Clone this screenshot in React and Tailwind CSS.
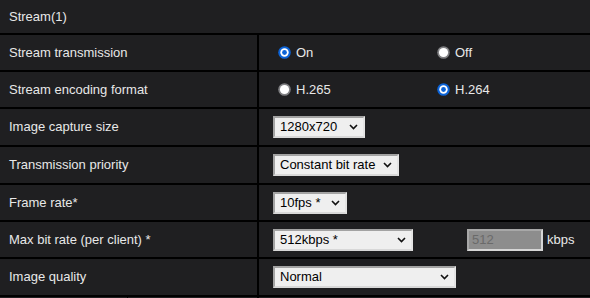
import React from "react";

const Radio = ({ checked }) => (
  <svg width="13" height="13" viewBox="0 0 13 13" className="shrink-0">
    {checked ? (
      <>
        <circle cx="6.5" cy="6.5" r="6.3" fill="#0b63d8" />
        <circle cx="6.5" cy="6.5" r="4.2" fill="#ffffff" />
        <circle cx="6.5" cy="6.5" r="2.4" fill="#0b63d8" />
      </>
    ) : (
      <>
        <circle cx="6.5" cy="6.5" r="6.3" fill="#7f7f82" />
        <circle cx="6.5" cy="6.5" r="4.6" fill="#ffffff" />
      </>
    )}
  </svg>
);

const Chevron = () => (
  <svg width="9" height="6" viewBox="0 0 9 6" className="shrink-0">
    <path d="M1 1l3.5 3.5L8 1" fill="none" stroke="#111" strokeWidth="1.6" />
  </svg>
);

const Select = ({ value, width }) => (
  <div
    className="h-[22px] flex items-center justify-between pl-[5px] pr-[5px] bg-[#efefef] border-2 border-t-[#a3a3a3] border-l-[#a3a3a3] border-b-[#d8d8d8] border-r-[#e4e4e4] text-[13px] text-black"
    style={{ width }}
  >
    <span>{value}</span>
    <Chevron />
  </div>
);

const RadioPair = ({ options, selected }) => (
  <div className="flex items-center pl-[19px]">
    {options.map((opt) => (
      <div key={opt} className="w-[159px] flex items-center gap-[5px]">
        <Radio checked={opt === selected} />
        <span>{opt}</span>
      </div>
    ))}
  </div>
);

const rows = [
  { label: "Stream transmission", h: "h-[37px]", value: <RadioPair options={["On", "Off"]} selected="On" /> },
  { label: "Stream encoding format", h: "h-[37px]", value: <RadioPair options={["H.265", "H.264"]} selected="H.264" /> },
  { label: "Image capture size", h: "h-[38px]", value: <Select value="1280x720" width={92} /> },
  { label: "Transmission priority", h: "h-[38px]", value: <Select value="Constant bit rate" width={126} /> },
  { label: "Frame rate*", h: "h-[37px]", value: <Select value="10fps *" width={74} /> },
  {
    label: "Max bit rate (per client) *",
    h: "h-[37px]",
    value: (
      <div className="flex items-center">
        <Select value="512kbps *" width={140} />
        <div className="ml-[54px] w-[76px] h-[22px] flex items-center pl-[3px] bg-[#8d8d8d] border-2 border-t-[#a8a8a8] border-l-[#a8a8a8] border-b-[#d6d6d6] border-r-[#d6d6d6] text-[13px] text-[#6a6a6a]">
          512
        </div>
        <span className="ml-[4px]">kbps</span>
      </div>
    ),
  },
  { label: "Image quality", h: "h-[38px]", value: <Select value="Normal" width={183} /> },
];

export default function App() {
  return (
    <div
      className="w-[590px] h-[298px] overflow-hidden bg-[#1f1f21] text-[#e8e8e8] text-[13px]"
      style={{ fontFamily: '"Liberation Sans", Arial, sans-serif' }}
    >
      {/* Header */}
      <div className="h-[35px] flex items-center pl-[9px] border-b-2 border-black">Stream(1)</div>

      {/* Rows */}
      {rows.map((row) => (
        <div key={row.label} className={`flex border-b-2 border-black ${row.h}`}>
          <div className="w-[259px] shrink-0 flex items-center pl-[9px] border-r-2 border-black">
            {row.label}
          </div>
          <div className={`flex-1 flex items-center ${row.value.type === RadioPair ? "" : "pl-[14px]"}`}>
            {row.value}
          </div>
        </div>
      ))}

      {/* Next section peeking in */}
      <div className="flex h-[10px]">
        <div className="w-[128px] border-r border-black" />
        <div className="w-[131px] border-r-2 border-black" />
      </div>
    </div>
  );
}
